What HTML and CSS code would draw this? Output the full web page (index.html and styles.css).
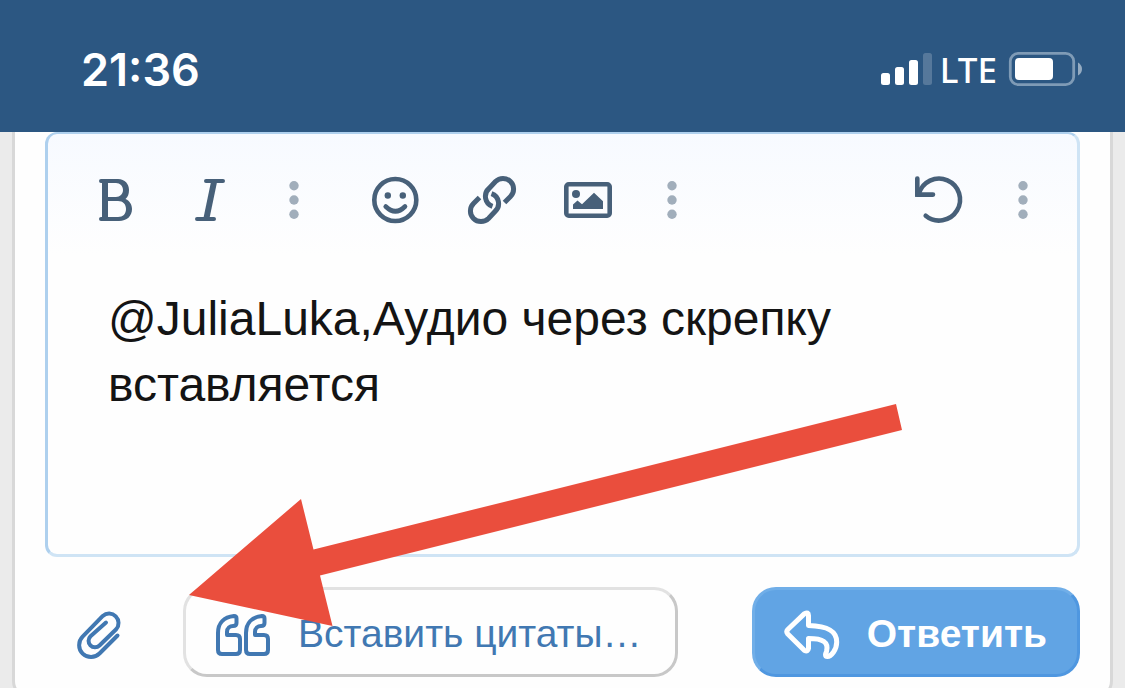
FILE: index.html
```html
<!DOCTYPE html>
<html lang="ru">
<head>
<meta charset="utf-8">
<meta name="viewport" content="width=device-width, initial-scale=1">
<title>Ответ в теме</title>
<link rel="stylesheet" href="styles.css">
</head>
<body>
<header class="status-bar">
  <time class="clock">21:36</time>
  <div class="status-icons">
    <svg class="signal" viewBox="882 52 51 34" aria-label="Сигнал">
      <rect x="882" y="73" width="9" height="12" rx="2.5"/>
      <rect x="896" y="67" width="9" height="18" rx="2.5"/>
      <rect x="910" y="60" width="9" height="25" rx="2.5"/>
      <rect x="924" y="53" width="9" height="32" rx="2.5" opacity=".2"/>
    </svg>
    <span class="network">LTE</span>
    <svg class="battery" viewBox="1009 52 73 34" aria-label="Батарея">
      <rect x="1010.3" y="53.3" width="63.4" height="31.4" rx="8" fill="none" stroke="#7f9bb6" stroke-width="2.8"/>
      <rect x="1015" y="58" width="38" height="22" rx="4"/>
      <path d="M1078 62.5 Q1082 65 1082 69 Q1082 73 1078 75.500Z" fill="#95abc1"/>
    </svg>
  </div>
</header>
<main class="card">
  <form class="reply-form">
    <div class="editor">
      <div class="toolbar">
        <button class="tool" type="button" aria-label="Жирный">
          <svg viewBox="90 176 48 48"><path fill-rule="evenodd" d="M101 179H118C125 179 129 184 129 190C129 194 128 197 125.500 199C130 201 132 205 132 209C132 216 127 221 119 221H101A2 2 0 0 1 101 217H102V183H101A2 2 0 0 1 101 179ZM108 183V197H116C120 197 123 194 123 190S120 183 116 183ZM108 201V217H118C123 217 126 214 126 209S123 201 118 201Z"/></svg>
        </button>
        <button class="tool" type="button" aria-label="Курсив">
          <svg class="line" viewBox="186 176 48 48"><path d="M206 181H223M197 219H214" stroke-width="4"/><path class="stem" d="M214 182L206.500 218"/></svg>
        </button>
        <button class="tool more" type="button" aria-label="Ещё форматирование">
          <svg viewBox="270 176 48 48"><circle cx="294" cy="185.800" r="4.700"/><circle cx="294" cy="200" r="4.700"/><circle cx="294" cy="214.200" r="4.700"/></svg>
        </button>
        <button class="tool smile" type="button" aria-label="Смайлы">
          <svg class="line" viewBox="371 176 48 48"><circle cx="395.300" cy="200" r="21"/><path d="M385.700 206.500Q395.500 216 405 206.500"/><g class="solid"><circle cx="387.800" cy="195.500" r="3.200"/><circle cx="402.800" cy="195.500" r="3.200"/></g></svg>
        </button>
        <button class="tool" type="button" aria-label="Вставить ссылку">
          <svg class="line butt" viewBox="467 176 48 48"><path d="M504.500 202.500L510.500 196.500A10.600 10.600 0 0 0 495.500 181.500L489 188.500A10.500 10.500 0 0 0 492.500 206.300M479.500 197.500L473.500 203.500A10.600 10.600 0 0 0 488.500 218.500L495 211.500A10.500 10.500 0 0 0 491.500 193.700"/></svg>
        </button>
        <button class="tool" type="button" aria-label="Вставить изображение">
          <svg class="line" viewBox="563 176 48 48"><rect x="566.300" y="184.300" width="43.400" height="31.400" rx="2.500"/><g class="solid"><circle cx="576" cy="194" r="4"/><path d="M573 209V204.500L577.500 200.500L582 204.300L594 192.700L603 201.300V209Z"/></g></svg>
        </button>
        <button class="tool more last" type="button" aria-label="Ещё вставка">
          <svg viewBox="269 176 48 48"><circle cx="294" cy="185.800" r="4.700"/><circle cx="294" cy="200" r="4.700"/><circle cx="294" cy="214.200" r="4.700"/></svg>
        </button>
        <button class="tool undo" type="button" aria-label="Отменить">
          <svg class="line" viewBox="915 176 48 48"><path d="M925.700 215.800A21 21 0 1 0 918.800 194"/><path d="M917.300 178.500V194.600H933"/><path class="solid" d="M915 190H921V196.900H915Z"/></svg>
        </button>
        <button class="tool more" type="button" aria-label="Настройки редактора">
          <svg viewBox="270 176 48 48"><circle cx="294" cy="185.800" r="4.700"/><circle cx="294" cy="200" r="4.700"/><circle cx="294" cy="214.200" r="4.700"/></svg>
        </button>
      </div>
      <textarea class="message" rows="4" aria-label="Текст ответа" spellcheck="false">@JuliaLuka,Аудио через скрепку вставляется</textarea>
    </div>
    <div class="actions">
      <button class="attach" type="button" aria-label="Прикрепить файл">
        <svg viewBox="75 605 48 54"><path d="M117.500 635.500L99.500 653.500A11.900 11.900 0 0 1 82.600 636.700L102.800 615.900A9.500 9.500 0 0 1 116.200 629.300L99.500 645.500A6.300 6.300 0 0 1 90.500 636.300L106 622.500"/></svg>
      </button>
      <button class="button quote" type="button">
        <svg viewBox="216 607 54 54"><path id="quote-mark" d="M234 616C224 617 218 623 218 633V650Q218 654 222 654H236Q240 654 240 650V639Q240 635 236 635H227V632C227 628 230 626 233 626Q236.500 626 236.500 623V618.500Q236.500 616 234 616Z"/><use href="#quote-mark" x="28"/></svg>
        <span>Вставить цитаты…</span>
      </button>
      <button class="button submit" type="submit">
        <svg viewBox="786 607 54 54"><path d="M788.800 629.500L805.500 613.600Q809.500 611.500 809.500 615.500V625.500C829 626 837.700 631 837.700 642C837.700 650 832 656.500 828.500 656.500C825.500 656.500 826.500 653.500 827.500 651.500C830 642 824 638.500 809.500 638.500V648.500Q809 652 805.500 650.500L788.800 634Q786.800 631.700 788.800 629.500Z"/></svg>
        <span>Ответить</span>
      </button>
    </div>
  </form>
</main>
<svg class="pointer" viewBox="0 0 714 224" aria-hidden="true"><path d="M0 191L112 95L124.500 145.500L707 0L713 26L131 171.500L143.500 222Z"/></svg>
</body>
</html>
```
FILE: styles.css
```css
* {
  box-sizing: border-box;
}

body {
  margin: 0;
  position: relative;
  overflow: hidden;
  background: #ebebeb;
  color: #141414;
  font-family: "Liberation Sans", Arial, sans-serif;
}

button {
  margin: 0;
  padding: 0;
  border: 0;
  background: none;
  font: inherit;
}

svg {
  display: block;
  flex: none;
  overflow: visible;
}

.status-bar {
  display: flex;
  align-items: center;
  justify-content: space-between;
  height: 132px;
  padding: 8px 43px 0 81px;
  background: #2c5782;
  color: #fff;
}

.clock {
  font: 600 45px/60px Inter, sans-serif;
}

.status-icons {
  display: flex;
  align-items: center;
  gap: 12px;
  padding-bottom: 2px;
}

.status-icons svg {
  fill: #fff;
}

.signal {
  width: 51px;
  height: 34px;
}

.network {
  margin-left: -4px;
  padding-top: 2px;
  font: 500 35px/48px "Noto Sans", sans-serif;
}

.battery {
  width: 73px;
  height: 34px;
}

.card {
  margin: 0 12px;
  padding: 0 30px 19px;
  border: 3px solid #d8d8d8;
  border-top: 0;
  border-radius: 0 0 18px 18px;
  background: #fefefe;
}

.editor {
  border: 3px solid #cfe4f5;
  border-top: 2px solid #aed0ee;
  border-left-color: #aed0ee;
  border-radius: 12px;
  background: linear-gradient(#f7faff, #fefefe 120px);
}

.toolbar {
  display: flex;
  align-items: center;
  height: 132px;
  padding: 0 31px 0 42px;
}

.tool {
  width: 48px;
  margin-right: 48px;
}

.tool svg {
  width: 48px;
  height: 48px;
  fill: #476079;
}

.tool.more {
  margin: 0 53px 0 -12px;
}

.tool.more svg {
  fill: #a1aebb;
}

.tool.more:last-child {
  margin: 0 -1px 0 -12px;
}

.tool.more.last {
  margin-right: auto;
}

.tool .line {
  fill: none;
  stroke: #476079;
  stroke-width: 4.6px;
  stroke-linecap: round;
  stroke-linejoin: round;
}

.tool .butt {
  stroke-width: 5px;
  stroke-linecap: butt;
}

.tool .stem {
  stroke-width: 6px;
  stroke-linecap: butt;
}

.tool .solid {
  fill: #476079;
  stroke: none;
}

.message {
  display: block;
  width: 100%;
  height: 288px;
  padding: 20px 60px;
  border: 0;
  outline: 0;
  resize: none;
  overflow: hidden;
  background: none;
  color: inherit;
  font: 48px/66px "Liberation Sans", Arial, sans-serif;
}

.actions {
  display: flex;
  align-items: center;
  padding-top: 30px;
}

.attach {
  margin: 0 60px 0 30px;
}

.attach svg {
  width: 48px;
  height: 54px;
}

.actions path {
  fill: none;
  stroke: #4178b2;
  stroke-width: 4px;
  stroke-linecap: round;
  stroke-linejoin: round;
}

.button {
  display: flex;
  align-items: center;
  gap: 28px;
  height: 90px;
  padding: 3px 30px 0;
  border: 3px solid;
  border-radius: 24px;
  white-space: nowrap;
}

.button svg {
  width: 54px;
  height: 54px;
}

.quote {
  padding-right: 34px;
  border-color: #e2e2e2 #c8c8c8 #c8c8c8 #e2e2e2;
  color: #4178b2;
  font-size: 39px;
}

.submit {
  margin-left: auto;
  border-color: #70aee8 #4f97e0 #4f97e0 #70aee8;
  background: #61a4e4;
  color: #fff;
  font-size: 39px;
  font-weight: 700;
}

.submit path {
  stroke: #fff;
  stroke-width: 5px;
}

.pointer {
  position: absolute;
  left: 189px;
  top: 404px;
  width: 714px;
  height: 224px;
  fill: #ea4e3d;
}
```
